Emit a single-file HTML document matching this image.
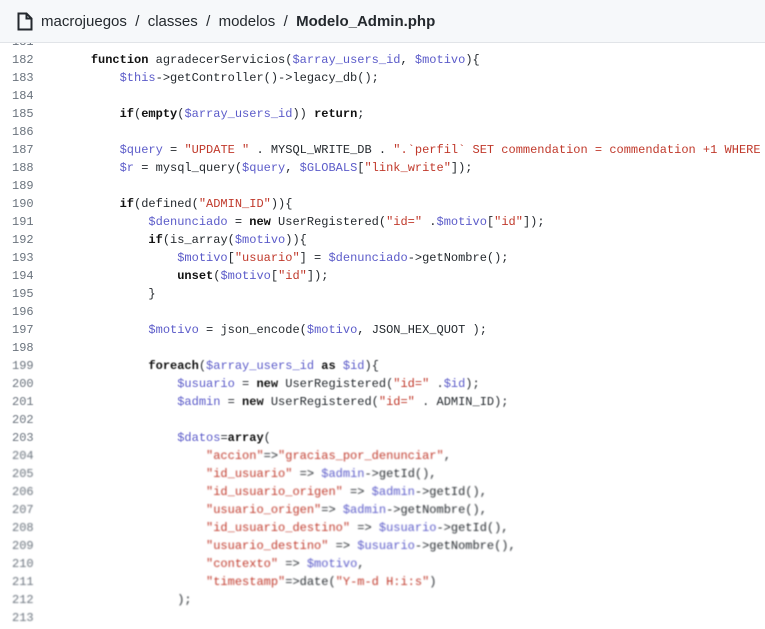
<!DOCTYPE html>
<html><head><meta charset="utf-8"><style>
body{margin:0;width:765px;height:629px;overflow:hidden;background:#fff;font-family:"Liberation Sans",sans-serif;position:relative}
.hdr{position:absolute;top:0;left:0;right:0;height:42px;background:#f6f8fa;border-bottom:1px solid #e1e4e8;z-index:2;display:flex;align-items:center;font-size:15px;color:#24292e}
.hdr svg{margin-left:17px;margin-right:8px}
.hdr b{font-weight:600}
.code{position:absolute;top:33px;left:0;right:0;font-family:"Liberation Mono",monospace;font-size:12px;color:#24292e}
.l{height:18px;line-height:18px;white-space:pre;display:block;overflow:hidden}
.n{display:inline-block;padding-left:12px;color:#6a737d;box-sizing:border-box;width:62px}
.k{color:#111;font-weight:bold}
.v{color:#5b5bc9}
.s{color:#c0392b}
.b1{filter:blur(0.5px)}
.b2{filter:blur(0.9px)}
</style></head><body>
<div class="hdr"><svg width="16" height="19" viewBox="0 0 16 19"><path d="M1.5 1.5h8l5 5v11h-13z M9.5 1.5v5h5" fill="none" stroke="#24292e" stroke-width="2"/></svg><span>macrojuegos&nbsp; / &nbsp;classes&nbsp; / &nbsp;modelos&nbsp; / &nbsp;<b>Modelo_Admin.php</b></span></div>
<div class="code">
<div class="l"><span class="n">181</span></div>
<div class="l"><span class="n">182</span>    <span class="k">function</span> agradecerServicios(<span class="v">$array_users_id</span>, <span class="v">$motivo</span>){</div>
<div class="l"><span class="n">183</span>        <span class="v">$this</span>-&gt;getController()-&gt;legacy_db();</div>
<div class="l"><span class="n">184</span></div>
<div class="l"><span class="n">185</span>        <span class="k">if</span>(<span class="k">empty</span>(<span class="v">$array_users_id</span>)) <span class="k">return</span>;</div>
<div class="l"><span class="n">186</span></div>
<div class="l"><span class="n">187</span>        <span class="v">$query</span> = <span class="s">"UPDATE "</span> . MYSQL_WRITE_DB . <span class="s">".`perfil` SET commendation = commendation +1 WHERE i</span></div>
<div class="l"><span class="n">188</span>        <span class="v">$r</span> = mysql_query(<span class="v">$query</span>, <span class="v">$GLOBALS</span>[<span class="s">"link_write"</span>]);</div>
<div class="l"><span class="n">189</span></div>
<div class="l"><span class="n">190</span>        <span class="k">if</span>(defined(<span class="s">"ADMIN_ID"</span>)){</div>
<div class="l"><span class="n">191</span>            <span class="v">$denunciado</span> = <span class="k">new</span> UserRegistered(<span class="s">"id="</span> .<span class="v">$motivo</span>[<span class="s">"id"</span>]);</div>
<div class="l"><span class="n">192</span>            <span class="k">if</span>(is_array(<span class="v">$motivo</span>)){</div>
<div class="l"><span class="n">193</span>                <span class="v">$motivo</span>[<span class="s">"usuario"</span>] = <span class="v">$denunciado</span>-&gt;getNombre();</div>
<div class="l"><span class="n">194</span>                <span class="k">unset</span>(<span class="v">$motivo</span>[<span class="s">"id"</span>]);</div>
<div class="l"><span class="n">195</span>            }</div>
<div class="l"><span class="n">196</span></div>
<div class="l"><span class="n">197</span>            <span class="v">$motivo</span> = json_encode(<span class="v">$motivo</span>, JSON_HEX_QUOT );</div>
<div class="l"><span class="n">198</span></div>
<div class="l b1"><span class="n">199</span>            <span class="k">foreach</span>(<span class="v">$array_users_id</span> <span class="k">as</span> <span class="v">$id</span>){</div>
<div class="l b1"><span class="n">200</span>                <span class="v">$usuario</span> = <span class="k">new</span> UserRegistered(<span class="s">"id="</span> .<span class="v">$id</span>);</div>
<div class="l b1"><span class="n">201</span>                <span class="v">$admin</span> = <span class="k">new</span> UserRegistered(<span class="s">"id="</span> . ADMIN_ID);</div>
<div class="l b1"><span class="n">202</span></div>
<div class="l b1"><span class="n">203</span>                <span class="v">$datos</span>=<span class="k">array</span>(</div>
<div class="l b2"><span class="n">204</span>                    <span class="s">"accion"</span>=&gt;<span class="s">"gracias_por_denunciar"</span>,</div>
<div class="l b2"><span class="n">205</span>                    <span class="s">"id_usuario"</span> =&gt; <span class="v">$admin</span>-&gt;getId(),</div>
<div class="l b2"><span class="n">206</span>                    <span class="s">"id_usuario_origen"</span> =&gt; <span class="v">$admin</span>-&gt;getId(),</div>
<div class="l b2"><span class="n">207</span>                    <span class="s">"usuario_origen"</span>=&gt; <span class="v">$admin</span>-&gt;getNombre(),</div>
<div class="l b2"><span class="n">208</span>                    <span class="s">"id_usuario_destino"</span> =&gt; <span class="v">$usuario</span>-&gt;getId(),</div>
<div class="l b2"><span class="n">209</span>                    <span class="s">"usuario_destino"</span> =&gt; <span class="v">$usuario</span>-&gt;getNombre(),</div>
<div class="l b2"><span class="n">210</span>                    <span class="s">"contexto"</span> =&gt; <span class="v">$motivo</span>,</div>
<div class="l b2"><span class="n">211</span>                    <span class="s">"timestamp"</span>=&gt;date(<span class="s">"Y-m-d H:i:s"</span>)</div>
<div class="l b2"><span class="n">212</span>                );</div>
<div class="l b2"><span class="n">213</span></div>
</div>
</body></html>
